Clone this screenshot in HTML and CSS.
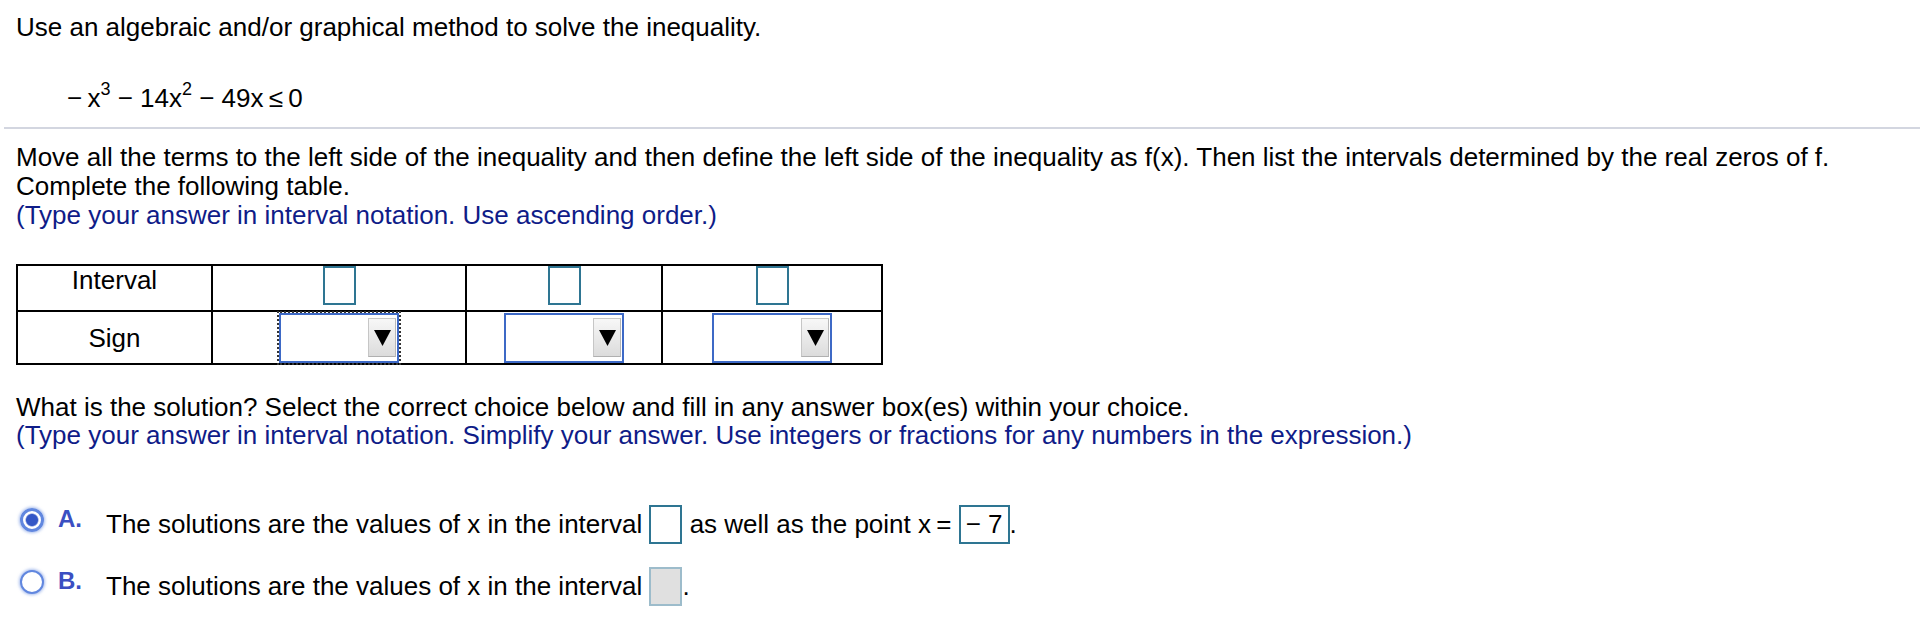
FILE: index.html
```html
<!DOCTYPE html>
<html lang="en">
<head>
    <meta charset="UTF-8">
    <title>Solve the inequality</title>
    <link rel="stylesheet" href="styles.css">
</head>
<body>
    <div class="question">
        <p class="lead">Use an algebraic and/or graphical method to solve the inequality.</p>
        <div class="equation">&minus;&thinsp;x<sup>3</sup> &minus; 14x<sup>2</sup> &minus; 49x&thinsp;&le;&thinsp;0</div>
    </div>
    <div class="divider"></div>
    <div class="question">
        <div class="step">
            <p>Move all the terms to the left side of the inequality and then define the left side of the inequality as f(x). Then list the intervals determined by the real zeros of f.</p>
            <p>Complete the following table.</p>
            <p class="hint">(Type your answer in interval notation. Use ascending order.)</p>
        </div>

        <table class="sign-table">
            <tr class="row-interval">
                <td class="col-label">Interval</td>
                <td class="col-1"><span class="answer-box"></span></td>
                <td class="col-2"><span class="answer-box"></span></td>
                <td class="col-3"><span class="answer-box"></span></td>
            </tr>
            <tr class="row-sign">
                <td>Sign</td>
                <td><span class="dropdown focused"><span class="drop-btn"><svg width="17" height="16" viewBox="0 0 17 16"><polygon points="0,0 17,0 8.5,16" fill="#000"/></svg></span></span></td>
                <td><span class="dropdown"><span class="drop-btn"><svg width="17" height="16" viewBox="0 0 17 16"><polygon points="0,0 17,0 8.5,16" fill="#000"/></svg></span></span></td>
                <td><span class="dropdown"><span class="drop-btn"><svg width="17" height="16" viewBox="0 0 17 16"><polygon points="0,0 17,0 8.5,16" fill="#000"/></svg></span></span></td>
            </tr>
        </table>

        <div class="solution">
            <p>What is the solution? Select the correct choice below and fill in any answer box(es) within your choice.</p>
            <p class="hint">(Type your answer in interval notation. Simplify your answer. Use integers or fractions for any numbers in the expression.)</p>
        </div>

        <div class="choice choice-a">
            <span class="radio checked"></span><span class="choice-letter">A.</span>The solutions are the values of x in the interval <span class="answer-box"></span> as well as the point x&thinsp;=&nbsp;<span class="answer-box filled">&minus; 7</span>.
        </div>
        <div class="choice choice-b">
            <span class="radio"></span><span class="choice-letter">B.</span>The solutions are the values of x in the interval <span class="answer-box disabled"></span>.
        </div>
    </div>
</body>
</html>
```

FILE: styles.css
```css
* {
    box-sizing: border-box;
}
body {
    margin: 0;
    padding: 13px 0 0;
    font-family: 'Liberation Sans', Arial, sans-serif;
    font-size: 26px;
    line-height: 28px;
    color: #000;
    background: #fff;
}
p {
    margin: 0;
}
.question {
    padding: 0 16px;
}
.equation {
    margin-top: 43px;
    padding-left: 51px;
    white-space: nowrap;
}
.equation sup {
    font-size: 18px;
    line-height: 0;
    vertical-align: 12px;
}
.divider {
    margin: 15px 0 0 4px;
    border-top: 2px solid #d3d6e0;
}
.step {
    margin-top: 14px;
    line-height: 29px;
}
.hint {
    color: #0f1c88;
}

/* sign table */
.sign-table {
    margin-top: 34px;
    border-collapse: collapse;
    table-layout: fixed;
}
.sign-table td {
    border: 2px solid #000;
    padding: 0;
    text-align: center;
}
.col-label {
    width: 195px;
}
.col-1 {
    width: 254px;
}
.col-2 {
    width: 196px;
}
.col-3 {
    width: 220px;
}
.row-interval td {
    height: 46px;
    vertical-align: top;
}
.row-sign td {
    height: 53px;
    vertical-align: middle;
}
.answer-box {
    display: inline-block;
    width: 33px;
    height: 39px;
    border: 2px solid #2e7592;
    vertical-align: -11px;
}
.answer-box.filled {
    width: 51px;
    line-height: 35px;
    text-align: center;
    vertical-align: top;
}
.answer-box.disabled {
    background: #e0e0e0;
    border-color: #9dbccb;
}
.dropdown {
    display: inline-flex;
    align-items: center;
    justify-content: flex-end;
    width: 120px;
    height: 50px;
    padding-right: 1px;
    border: 2px solid #3d69c6;
    background: #fff;
    vertical-align: middle;
}
.dropdown.focused {
    outline: 2px dotted #333;
}
.drop-btn {
    display: flex;
    align-items: center;
    justify-content: center;
    width: 28px;
    height: 39px;
    border: 1px solid #c6c6c6;
    border-right-color: #b8b8b8;
    border-bottom-color: #b0b0b0;
    background: linear-gradient(#f7f7f7, #dcdcdc);
}

/* choices */
.solution {
    margin-top: 28px;
}
.choice {
    white-space: nowrap;
}
.choice-a {
    margin-top: 56px;
}
.choice-b {
    margin-top: 23px;
}
.radio {
    display: inline-block;
    width: 24px;
    height: 24px;
    margin: 0 14px 0 4px;
    border: 2px solid #6187df;
    border-radius: 50%;
    background: #fff;
    box-shadow: 0 0 3px 1px rgba(96, 134, 222, 0.55);
    vertical-align: 1px;
}
.radio.checked {
    border-width: 3px;
    background: radial-gradient(circle, #3457c6 0, #3457c6 5.5px, #fff 7px);
}
.choice-letter {
    display: inline-block;
    width: 48px;
    font-size: 24px;
    font-weight: bold;
    color: #3b4fc2;
    vertical-align: 6px;
}
```
